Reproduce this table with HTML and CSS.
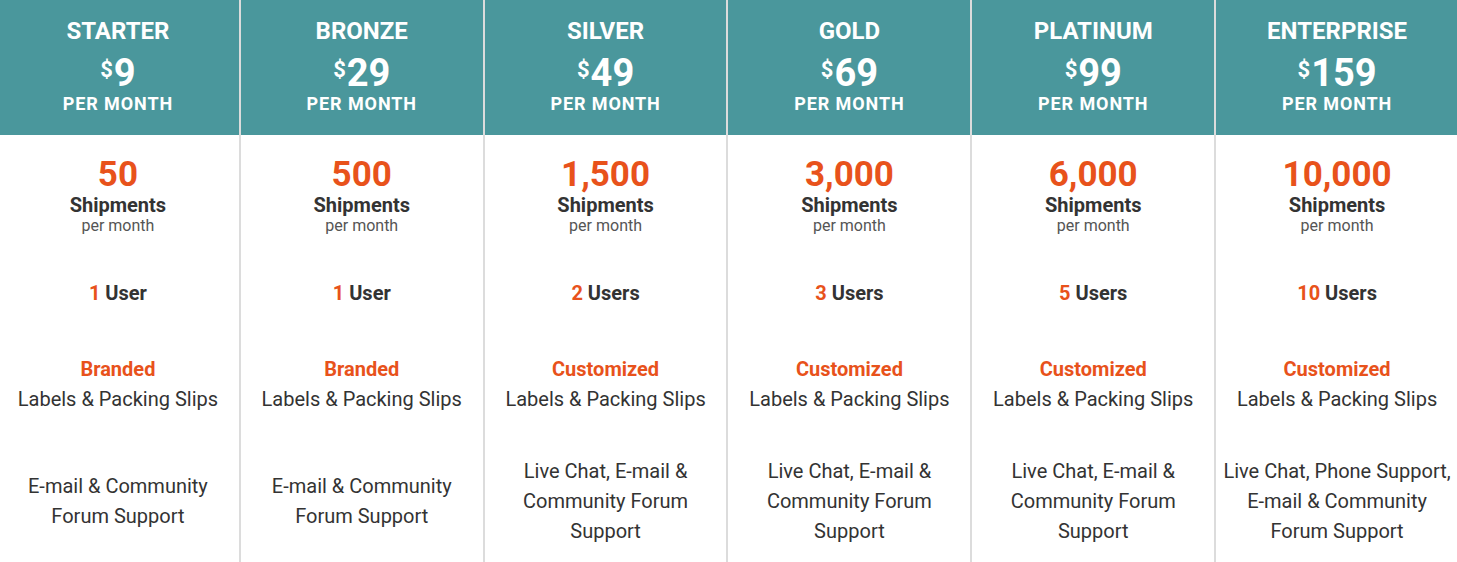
FILE: index.html
```html
<!DOCTYPE html>
<html>
<head>
<meta charset="utf-8">
<link rel="stylesheet" href="styles.css">
</head>
<body>
<div class="plans">
  <div class="plan">
    <div class="head"><div class="name">STARTER</div><div class="price"><sup>$</sup>9</div><div class="per">PER MONTH</div></div>
    <div class="cell r1"><div class="big">50</div><div class="ship">Shipments</div><div class="sub">per month</div></div>
    <div class="cell r2"><div class="users"><span class="hl">1</span> User</div></div>
    <div class="cell r3"><div class="brand">Branded</div><div class="txt">Labels &amp; Packing Slips</div></div>
    <div class="cell r4"><div class="txt">E-mail &amp; Community<br>Forum Support</div></div>
  </div>
  <div class="plan">
    <div class="head"><div class="name">BRONZE</div><div class="price"><sup>$</sup>29</div><div class="per">PER MONTH</div></div>
    <div class="cell r1"><div class="big">500</div><div class="ship">Shipments</div><div class="sub">per month</div></div>
    <div class="cell r2"><div class="users"><span class="hl">1</span> User</div></div>
    <div class="cell r3"><div class="brand">Branded</div><div class="txt">Labels &amp; Packing Slips</div></div>
    <div class="cell r4"><div class="txt">E-mail &amp; Community<br>Forum Support</div></div>
  </div>
  <div class="plan">
    <div class="head"><div class="name">SILVER</div><div class="price"><sup>$</sup>49</div><div class="per">PER MONTH</div></div>
    <div class="cell r1"><div class="big">1,500</div><div class="ship">Shipments</div><div class="sub">per month</div></div>
    <div class="cell r2"><div class="users"><span class="hl">2</span> Users</div></div>
    <div class="cell r3"><div class="brand">Customized</div><div class="txt">Labels &amp; Packing Slips</div></div>
    <div class="cell r4"><div class="txt">Live Chat, E-mail &amp;<br>Community Forum<br>Support</div></div>
  </div>
  <div class="plan">
    <div class="head"><div class="name">GOLD</div><div class="price"><sup>$</sup>69</div><div class="per">PER MONTH</div></div>
    <div class="cell r1"><div class="big">3,000</div><div class="ship">Shipments</div><div class="sub">per month</div></div>
    <div class="cell r2"><div class="users"><span class="hl">3</span> Users</div></div>
    <div class="cell r3"><div class="brand">Customized</div><div class="txt">Labels &amp; Packing Slips</div></div>
    <div class="cell r4"><div class="txt">Live Chat, E-mail &amp;<br>Community Forum<br>Support</div></div>
  </div>
  <div class="plan">
    <div class="head"><div class="name">PLATINUM</div><div class="price"><sup>$</sup>99</div><div class="per">PER MONTH</div></div>
    <div class="cell r1"><div class="big">6,000</div><div class="ship">Shipments</div><div class="sub">per month</div></div>
    <div class="cell r2"><div class="users"><span class="hl">5</span> Users</div></div>
    <div class="cell r3"><div class="brand">Customized</div><div class="txt">Labels &amp; Packing Slips</div></div>
    <div class="cell r4"><div class="txt">Live Chat, E-mail &amp;<br>Community Forum<br>Support</div></div>
  </div>
  <div class="plan">
    <div class="head"><div class="name">ENTERPRISE</div><div class="price"><sup>$</sup>159</div><div class="per">PER MONTH</div></div>
    <div class="cell r1"><div class="big">10,000</div><div class="ship">Shipments</div><div class="sub">per month</div></div>
    <div class="cell r2"><div class="users"><span class="hl">10</span> Users</div></div>
    <div class="cell r3"><div class="brand">Customized</div><div class="txt">Labels &amp; Packing Slips</div></div>
    <div class="cell r4"><div class="txt">Live Chat, Phone Support,<br>E-mail &amp; Community<br>Forum Support</div></div>
  </div>
</div>
</body>
</html>
```
FILE: styles.css
```css
html, body {
  margin: 0;
  padding: 0;
  background: #fff;
  overflow: hidden;
}
body {
  font-family: Roboto, "Liberation Sans", sans-serif;
  color: #333;
}
.plans {
  display: grid;
  grid-template-columns: repeat(6, 1fr);
  width: 1463px;
  height: 562px;
  margin-left: -3px;
}
.plan {
  display: flex;
  flex-direction: column;
  text-align: center;
  border-right: 2px solid #dcdcdc;
}
.head {
  background: #4a979c;
  color: #fff;
  height: 135px;
  box-sizing: border-box;
  padding-top: 17px;
  font-weight: 700;
}
.name {
  font-size: 24px;
  line-height: 28px;
}
.price {
  font-size: 38px;
  line-height: 40px;
  margin-top: 8px;
}
.price sup {
  font-size: 22px;
  vertical-align: top;
  position: relative;
  top: -3px;
  margin-right: 1px;
}
.per {
  font-size: 18px;
  line-height: 22px;
  letter-spacing: 0.9px;
}
.cell {
  display: flex;
  flex-direction: column;
  justify-content: center;
  box-sizing: border-box;
}
.r1 { height: 115px; padding-top: 6px; }
.r2 { height: 82px; padding-top: 4px; }
.r3 { height: 115px; padding-bottom: 8px; }
.r4 { flex: 1; padding-bottom: 8px; }
.big {
  color: #e8521b;
  font-size: 35px;
  font-weight: 700;
  line-height: 38px;
}
.ship {
  font-size: 20px;
  font-weight: 700;
  line-height: 22px;
}
.sub {
  font-size: 16px;
  line-height: 20px;
  color: #555;
}
.users {
  font-size: 20px;
  font-weight: 700;
  line-height: 24px;
}
.hl { color: #e8521b; }
.brand {
  color: #e8521b;
  font-size: 20px;
  font-weight: 700;
  line-height: 24px;
  margin-bottom: 3px;
}
.txt {
  font-size: 20px;
  line-height: 30px;
}
```
